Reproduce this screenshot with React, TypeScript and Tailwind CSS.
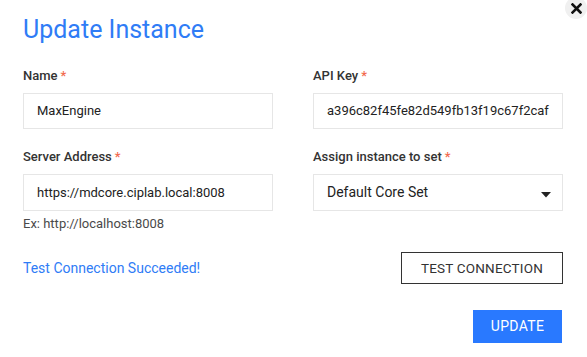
import React from "react";

const Label = ({ children }: { children: React.ReactNode }) => (
  <div className="text-[13px] leading-[16px] font-medium text-[#333333]">
    {children}
    <span className="text-[#f26b4f] ml-[3px]">*</span>
  </div>
);

const Field = ({ children, className = "" }: { children: React.ReactNode; className?: string }) => (
  <div
    className={
      "h-[36px] border border-[#e6e6e6] bg-white flex items-center pl-[13px] text-[13px] text-[#222222] " +
      className
    }
  >
    {children}
  </div>
);

export default function App() {
  return (
    <div
      className="relative w-[587px] h-[357px] bg-white overflow-hidden"
      style={{ fontFamily: "Roboto, 'Liberation Sans', sans-serif" }}
    >
      <button className="absolute top-[-3px] right-[0px] w-[22px] h-[22px] rounded-full bg-[#f0f0f0] flex items-center justify-center pt-[1px] pl-[1px]">
        <svg width="11" height="11" viewBox="0 0 11 11">
          <path d="M1.5 1.5 L9.5 9.5 M9.5 1.5 L1.5 9.5" stroke="#111" strokeWidth="2.6" strokeLinecap="square" />
        </svg>
      </button>
      <div className="pl-[23px] pr-[24px] pt-[16px]">
        <h1 className="text-[25px] leading-[28px] text-[#2f7cf6] font-normal">Update Instance</h1>
        <div className="grid grid-cols-[250px_250px] gap-x-[40px] mt-[24px]">
          <div className="flex flex-col">
            <Label>Name</Label>
            <Field className="mt-[9px]">MaxEngine</Field>
          </div>
          <div className="flex flex-col">
            <Label>API Key</Label>
            <Field className="mt-[9px]">a396c82f45fe82d549fb13f19c67f2caf</Field>
          </div>
          <div className="flex flex-col mt-[20px]">
            <Label>Server Address</Label>
            <Field className="mt-[9px] h-[37px]">https://mdcore.ciplab.local:8008</Field>
            <div className="mt-[5px] text-[13px] leading-[16px] text-[#4a4a4a]">Ex: http://localhost:8008</div>
          </div>
          <div className="flex flex-col mt-[20px]">
            <Label>Assign instance to set</Label>
            <Field className="mt-[9px] h-[37px] justify-between pr-[11px] items-start pt-[7px] text-[14px]">
              <span>Default Core Set</span>
              <svg width="10" height="6" viewBox="0 0 10 6" className="mt-[10px]">
                <path d="M0 0 L10 0 L5 5.5 Z" fill="#222" />
              </svg>
            </Field>
          </div>
        </div>
        <div className="flex items-center justify-between mt-[20px]">
          <span className="text-[14px] text-[#2f7cf6]">Test Connection Succeeded!</span>
          <button className="w-[162px] h-[32px] border border-[#333333] text-[13.5px] text-[#333333] tracking-[0.2px]">
            TEST CONNECTION
          </button>
        </div>
        <div className="flex justify-end mt-[26px] pr-[1px]">
          <button className="w-[89px] h-[33px] bg-[#2979ff] text-white text-[14px] tracking-[0.3px]">UPDATE</button>
        </div>
      </div>
    </div>
  );
}
